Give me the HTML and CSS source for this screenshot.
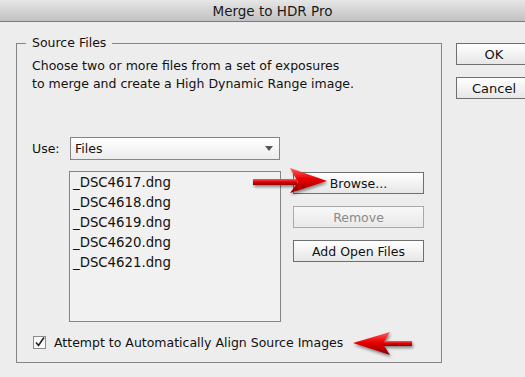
FILE: index.html
```html
<!DOCTYPE html>
<html lang="en">
<head>
    <meta charset="UTF-8">
    <title>Merge to HDR Pro</title>
    <link rel="stylesheet" href="styles.css">
</head>
<body>
    <div class="titlebar">Merge to HDR Pro</div>

    <div class="dialog">
        <fieldset class="source">
            <legend>Source Files</legend>
            <div class="inner">
                <p class="desc">Choose two or more files from a set of exposures<br>to merge and create a High Dynamic Range image.</p>

                <div class="use-row">
                    <span class="use-label">Use:</span>
                    <div class="select">
                        <span>Files</span>
                        <span class="caret"></span>
                    </div>
                </div>

                <div class="files-row">
                    <ul class="file-list">
                        <li>_DSC4617.dng</li>
                        <li>_DSC4618.dng</li>
                        <li>_DSC4619.dng</li>
                        <li>_DSC4620.dng</li>
                        <li>_DSC4621.dng</li>
                    </ul>
                    <div class="file-buttons">
                        <button class="btn">Browse...</button>
                        <button class="btn disabled">Remove</button>
                        <button class="btn">Add Open Files</button>
                    </div>
                </div>

                <label class="check-row">
                    <svg class="checkbox" width="13" height="13" viewBox="0 0 13 13">
                        <rect x="0.5" y="0.5" width="12" height="12" fill="#fafafa" stroke="#8a8a8a"/>
                        <path d="M3 6.5 L5.5 9.5 L11 1.5" fill="none" stroke="#222" stroke-width="1.6"/>
                    </svg>
                    Attempt to Automatically Align Source Images
                </label>
            </div>
        </fieldset>

        <div class="actions">
            <button class="btn">OK</button>
            <button class="btn">Cancel</button>
        </div>
    </div>

    <!-- red callout arrows drawn over the dialog -->
    <svg class="arrow arrow-browse" width="90" height="40" viewBox="248 164 90 40">
        <defs>
            <linearGradient id="red1" x1="0" y1="0" x2="0" y2="1">
                <stop offset="0" stop-color="#ff5a5a"/>
                <stop offset="0.45" stop-color="#e80000"/>
                <stop offset="1" stop-color="#8a0000"/>
            </linearGradient>
            <filter id="shade1" x="-20%" y="-20%" width="140%" height="160%">
                <feDropShadow dx="1" dy="2" stdDeviation="1.5" flood-color="#000" flood-opacity="0.45"/>
            </filter>
        </defs>
        <g filter="url(#shade1)" fill="url(#red1)">
            <rect x="253" y="179" width="44" height="6"/>
            <polygon points="290,168 327,181 290,193 298,182"/>
        </g>
    </svg>

    <svg class="arrow arrow-align" width="70" height="36" viewBox="348 328 70 36">
        <defs>
            <linearGradient id="red2" x1="0" y1="0" x2="0" y2="1">
                <stop offset="0" stop-color="#ff5a5a"/>
                <stop offset="0.45" stop-color="#e80000"/>
                <stop offset="1" stop-color="#8a0000"/>
            </linearGradient>
            <filter id="shade2" x="-20%" y="-20%" width="140%" height="160%">
                <feDropShadow dx="1" dy="2" stdDeviation="1.5" flood-color="#000" flood-opacity="0.45"/>
            </filter>
        </defs>
        <g filter="url(#shade2)" fill="url(#red2)">
            <rect x="382" y="341" width="30" height="5"/>
            <polygon points="353,343 390,332 383,344 390,355"/>
        </g>
    </svg>
</body>
</html>
```

FILE: styles.css
```css
:root {
    --bg: #ededed;
    --border: #858585;
    --text: #111;
}

body {
    margin: 0;
    width: 525px;
    height: 377px;
    overflow: hidden;
    position: relative;
    background: var(--bg);
    color: var(--text);
    font-family: "DejaVu Sans", "Liberation Sans", sans-serif;
    font-size: 12.5px;
}

.titlebar {
    height: 21px;
    line-height: 22px;
    padding-left: 20px;
    text-align: center;
    font-size: 13.5px;
    color: #1a1a1a;
    background: linear-gradient(#e6e6e6, #c2c2c2);
    border-bottom: 1px solid #7c7c7c;
}

.dialog {
    display: flex;
    gap: 14px;
    padding: 14px 0 0 16px;
}

.source {
    flex-shrink: 0;
    margin: 0;
    padding: 0;
    width: 426px;
    height: 327px;
    border: 1px solid var(--border);
    box-sizing: border-box;
}

.source legend {
    margin-left: 9px;
    padding: 0 6px;
    line-height: 14px;
}

.inner {
    padding: 7px 0 0 15px;
}

.desc {
    margin: 0;
    line-height: 18px;
}

.use-row {
    display: flex;
    align-items: center;
    margin-top: 44px;
}

.use-label {
    width: 38px;
}

.select {
    width: 210px;
    height: 23px;
    box-sizing: border-box;
    border: 1px solid var(--border);
    background: linear-gradient(#ffffff, #ececec);
    display: flex;
    align-items: center;
    justify-content: space-between;
    padding: 0 6px 0 4px;
}

.caret {
    width: 0;
    height: 0;
    border-left: 4px solid transparent;
    border-right: 4px solid transparent;
    border-top: 5px solid #555;
}

.files-row {
    display: flex;
    gap: 12px;
    margin-top: 11px;
    margin-left: 37px;
}

.file-list {
    list-style: none;
    margin: 0;
    padding: 1px 0 0 3px;
    width: 212px;
    height: 151px;
    box-sizing: border-box;
    border: 1px solid var(--border);
    background: #f1f1f1;
}

.file-list li {
    font-size: 13.3px;
    line-height: 20px;
}

.file-buttons {
    display: flex;
    flex-direction: column;
    gap: 12px;
    margin-top: 1px;
}

.btn {
    width: 131px;
    height: 22px;
    padding: 0;
    font: inherit;
    color: var(--text);
    border: 1px solid #6f6f6f;
    background: linear-gradient(#ffffff, #e6e6e6);
}

.btn.disabled {
    color: #8a8a8a;
    border-color: #a9a9a9;
    background: linear-gradient(#f8f8f8, #e9e9e9);
}

.check-row {
    display: flex;
    align-items: center;
    gap: 8px;
    margin-top: 13px;
    margin-left: 1px;
}

.checkbox {
    display: block;
}

.actions {
    flex-shrink: 0;
    display: flex;
    flex-direction: column;
    gap: 12px;
    padding-top: 7px;
}

.actions .btn {
    width: 76px;
    font-size: 13px;
}

.arrow {
    position: absolute;
    overflow: visible;
}

.arrow-browse {
    left: 248px;
    top: 164px;
}

.arrow-align {
    left: 348px;
    top: 328px;
}
```
